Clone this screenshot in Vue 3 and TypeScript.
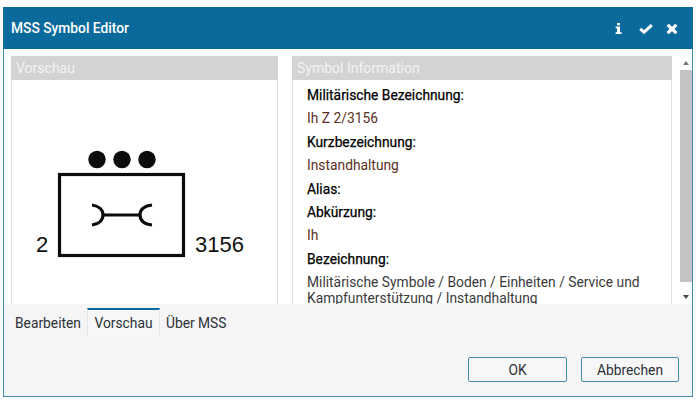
<script setup lang="ts">
const tabs: string[] = ['Bearbeiten', 'Vorschau', 'Über MSS']
const active = 'Vorschau'
const info: { label: string; value?: string }[] = [
  { label: 'Militärische Bezeichnung:', value: 'Ih Z 2/3156' },
  { label: 'Kurzbezeichnung:', value: 'Instandhaltung' },
  { label: 'Alias:' },
  { label: 'Abkürzung:', value: 'Ih' },
  { label: 'Bezeichnung:', value: 'Militärische Symbole / Boden / Einheiten / Service und Kampfunterstützung / Instandhaltung' },
]
</script>

<template>
  <div class="page">
    <div class="dialog">
      <header class="titlebar">
        <span class="title">MSS Symbol Editor</span>
        <div class="tools">
          <svg class="t-info" width="7" height="11" viewBox="0 0 7 11"><path d="M2 0h3v2.300H2zM.6 3.600H5v5.700h1.600V11H.6V9.300H2V5.300H.6z" fill="#fff"/></svg>
          <svg class="t-check" width="14" height="10" viewBox="0 0 14 10"><path d="M1.200 4.800 5 8.200 12.800 1.200" fill="none" stroke="#fff" stroke-width="3"/></svg>
          <svg width="12" height="10" viewBox="0 0 12 10"><path d="M1.600 .8l8.800 8.400M10.400 .8l-8.800 8.400" stroke="#fff" stroke-width="3.200"/></svg>
        </div>
      </header>

      <div class="content">
        <section class="panel left">
          <div class="panel-head">Vorschau</div>
          <div class="panel-body symbol-body">
            <svg class="symbol" width="240" height="112" viewBox="0 0 240 112">
              <circle cx="78" cy="9.500" r="8.700" fill="#0c0c0c"/>
              <circle cx="103" cy="9.500" r="8.700" fill="#0c0c0c"/>
              <circle cx="128" cy="9.500" r="8.700" fill="#0c0c0c"/>
              <rect x="40.500" y="24.500" width="124" height="81" fill="#fff" stroke="#0c0c0c" stroke-width="3.200"/>
              <path d="M73 55c7 1 11 5 11 10s-4 9-11 10M84 65h37M133 55c-8 1-12 5-12 10s4 9 12 10" fill="none" stroke="#0c0c0c" stroke-width="3.200"/>
              <text x="17" y="102" class="sym-text">2</text>
              <text x="176" y="102" class="sym-text">3156</text>
            </svg>
          </div>
        </section>

        <section class="panel right">
          <div class="panel-head">Symbol Information</div>
          <div class="panel-body info-body">
            <template v-for="row in info" :key="row.label">
              <div class="label">{{ row.label }}</div>
              <div v-if="row.value" class="value">{{ row.value }}</div>
            </template>
          </div>
        </section>

        <div class="scrollbar">
          <span class="arrow up"></span>
          <span class="track"><span class="thumb"></span></span>
          <span class="arrow down"></span>
        </div>
      </div>

      <nav class="tabs">
        <div v-for="t in tabs" :key="t" class="tab" :class="{ active: t === active }">{{ t }}</div>
      </nav>

      <footer class="actions">
        <button class="btn ok">OK</button>
        <button class="btn cancel">Abbrechen</button>
      </footer>
    </div>
  </div>
</template>

<style>
html, body { margin: 0; background: #fff; }
</style>

<style scoped>
.page {
  width: 700px;
  height: 402px;
  padding: 7px 7px 5px 3px;
  box-sizing: border-box;
  font-family: Roboto, "Noto Sans", sans-serif;
}
.dialog {
  height: 390px;
  box-sizing: border-box;
  border: 1px solid #3f8cab;
  border-top: 0;
  background: #f5f5f5;
  display: flex;
  flex-direction: column;
}
.titlebar {
  height: 42px;
  flex: none;
  margin: 0 -1px;
  background: #0a6a9c;
  color: #fff;
  display: flex;
  align-items: center;
  justify-content: space-between;
  padding: 0 15px 0 8px;
}
.title { font-size: 13.800px; font-weight: 500; }
.tools { display: flex; align-items: center; gap: 13px; margin-top: 1px; }
.t-info { margin-right: 4px; }
.content {
  height: 255px;
  flex: none;
  background: #fff;
  display: flex;
  padding: 7px 0 0 7px;
  box-sizing: border-box;
}
.panel {
  display: flex;
  flex-direction: column;
  box-sizing: border-box;
  border: 1px solid #e0e0e0;
  border-width: 0 1px;
}
.left { width: 267px; margin-right: 14px; }
.right { width: 380px; }
.panel-head {
  height: 24px;
  flex: none;
  margin: 0 -1px;
  background: #d3d3d3;
  color: #f4f4f4;
  font-size: 14px;
  line-height: 24px;
  padding-left: 5px;
}
.panel-body { flex: 1; min-height: 0; overflow: hidden; }
.symbol-body { padding: 70px 0 0 7px; }
.symbol { display: block; }
.sym-text { font-family: "Liberation Sans", sans-serif; font-size: 22px; fill: #111; }
.info-body { padding: 4px 20px 0 14px; font-size: 13.800px; }
.label { color: #000; line-height: 23.400px; -webkit-text-stroke: 0.250px #000; }
.value { color: #5a2f24; line-height: 23.400px; }
.value:last-child { line-height: 16px; color: #3a3a3a; margin-top: 3px; }
.scrollbar {
  width: 12px;
  margin-left: 8px;
  display: flex;
  flex-direction: column;
  align-items: center;
}
.arrow {
  width: 0;
  height: 0;
  border-left: 3px solid transparent;
  border-right: 3px solid transparent;
  margin: 5px 0;
}
.arrow.up { border-bottom: 4px solid #777; }
.arrow.down { border-top: 4px solid #444; }
.track { flex: 1; width: 100%; display: block; }
.thumb { display: block; height: 212px; background: #c4c4c4; }
.tabs {
  height: 53px;
  flex: none;
  display: flex;
  align-items: flex-start;
  padding: 4px 0 0 5px;
  box-sizing: border-box;
  font-size: 13.800px;
  color: #2b3038;
}
.tab {
  height: 28px;
  line-height: 26px;
  padding: 2px 6px 0;
  box-sizing: border-box;
}
.tab.active {
  border-top: 2px solid #0a6a9c;
  border-left: 1px solid #e4e4e4;
  border-right: 1px solid #e4e4e4;
  background: #f7f7f7;
  padding: 0 6px;
  width: 73px;
  text-align: center;
}
.actions {
  display: flex;
  justify-content: flex-end;
  gap: 14px;
  padding: 0 13px 0 0;
}
.btn {
  height: 25px;
  padding: 0;
  border: 1px solid #3f8cab;
  border-radius: 2px;
  background: #f7f7f7;
  color: #2b3038;
  font: 13.800px Roboto, sans-serif;
}
.ok { width: 99px; }
.cancel { width: 98px; }
</style>
